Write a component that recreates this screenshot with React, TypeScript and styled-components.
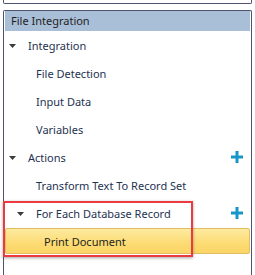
import styled, { createGlobalStyle } from "styled-components";

const GlobalStyle = createGlobalStyle`
  html, body {
    margin: 0;
    padding: 0;
    background: #ffffff;
  }
  body {
    font-family: "Segoe UI", "Noto Sans", "Open Sans", sans-serif;
    width: 255px;
    height: 275px;
    overflow: hidden;
  }
`;

type TreeRow = {
  label: string;
  indent: number;
  expander?: boolean;
  add?: boolean;
  selected?: boolean;
};

const rows: TreeRow[] = [
  { label: "Integration", indent: 0, expander: true },
  { label: "File Detection", indent: 1 },
  { label: "Input Data", indent: 1 },
  { label: "Variables", indent: 1 },
  { label: "Actions", indent: 0, expander: true, add: true },
  { label: "Transform Text To Record Set", indent: 1 },
  { label: "For Each Database Record", indent: 1, expander: true, add: true },
  { label: "Print Document", indent: 2, selected: true },
];

function Expander() {
  return (
    <svg width="7" height="4" viewBox="0 0 7 4">
      <path d="M0 0 H7 L3.5 4 Z" fill="#3c3c3c" />
    </svg>
  );
}

function PlusIcon() {
  return (
    <svg width="12" height="12" viewBox="0 0 12 12">
      <rect x="4.5" y="0" width="3" height="12" fill="#1696c9" />
      <rect x="0" y="4.5" width="12" height="3" fill="#1696c9" />
    </svg>
  );
}

export default function App() {
  return (
    <>
      <GlobalStyle />
      <Page>
        <TopBox />
        <Panel>
          <PanelHeader>File Integration</PanelHeader>
          <Tree>
            {rows.map((row) => (
              <Row key={row.label} $selected={row.selected} $indent={row.indent}>
                <ExpanderSlot>{row.expander && <Expander />}</ExpanderSlot>
                <Label>{row.label}</Label>
                {row.add && (
                  <AddButton>
                    <PlusIcon />
                  </AddButton>
                )}
              </Row>
            ))}
          </Tree>
          <Callout />
        </Panel>
      </Page>
    </>
  );
}

const Page = styled.div`
  display: flex;
  flex-direction: column;
  gap: 6px;
  height: 275px;
  padding: 0 3px;
`;

const TopBox = styled.div`
  height: 3px;
  border: 1px solid #4e5470;
  border-top: none;
  border-radius: 0 0 2px 2px;
`;

const Panel = styled.div`
  position: relative;
  flex: 1;
  border: 1px solid #4e5470;
  border-bottom: none;
  border-radius: 2px 2px 0 0;
  padding: 0 1px;
`;

const PanelHeader = styled.div`
  height: 20px;
  line-height: 20px;
  padding-left: 6px;
  background: #a9bfd8;
  color: #1e1e1e;
  font-size: 11px;
`;

const Tree = styled.div`
  display: flex;
  flex-direction: column;
`;

const Row = styled.div<{ $selected?: boolean; $indent: number }>`
  display: flex;
  align-items: center;
  height: ${({ $selected }) => ($selected ? "26px" : "28px")};
  margin-top: ${({ $selected }) => ($selected ? "1px" : "0")};
  padding-left: ${({ $indent }) => 3 + $indent * 8}px;
  padding-right: 6px;
  font-size: 11px;
  box-sizing: border-box;
  border: 1px solid ${({ $selected }) => ($selected ? "#e2bd62" : "transparent")};
  border-radius: 2px;
  background: ${({ $selected }) =>
    $selected ? "linear-gradient(#fdeaa0, #fcdb73 60%, #fbd566)" : "transparent"};
  color: ${({ $selected }) => ($selected ? "#1e1e1e" : "#1e3250")};
`;

const ExpanderSlot = styled.span`
  display: flex;
  align-items: center;
  width: 7px;
  margin-right: 12px;
  padding-top: 2px;
`;

const Label = styled.span`
  flex: 1;
  white-space: nowrap;
`;

const AddButton = styled.span`
  display: flex;
  align-items: center;
`;

const Callout = styled.div`
  position: absolute;
  left: -1px;
  top: 190px;
  width: 186px;
  height: 52px;
  border: 2px solid #ec3b40;
  box-shadow: 0 1px 3px rgba(0, 0, 0, 0.35);
  pointer-events: none;
`;
